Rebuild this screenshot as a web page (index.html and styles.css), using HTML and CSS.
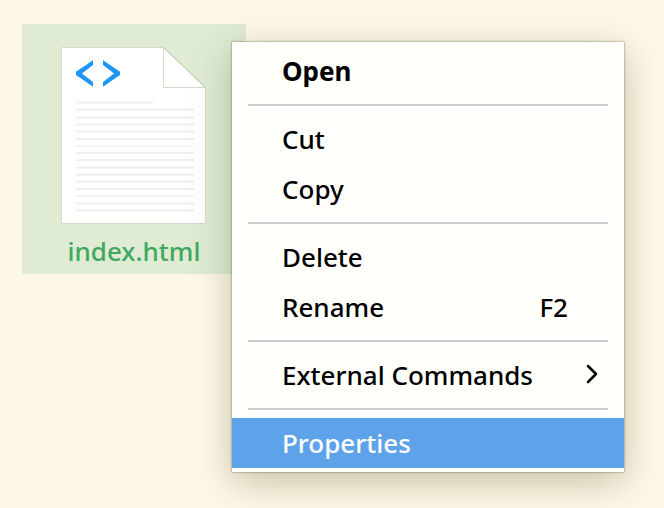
FILE: index.html
```html
<!DOCTYPE html>
<html lang="en">
<head>
<meta charset="utf-8">
<title>File manager</title>
<link rel="stylesheet" href="styles.css">
</head>
<body>
<main class="desktop">
  <figure class="file">
    <svg class="file-icon" viewBox="61 46 146 179" aria-hidden="true">
      <path class="paper" d="M61.5 47.5H163.5L205.5 87.5V223.5H61.5Z"/>
      <path class="fold" d="M163.5 47.5V87.5H205.5Z"/>
      <path class="crease" d="M163.5 47.5L205.5 87.5"/>
      <path class="code" d="M93 60.3L76 71.7V75L93 86.7V82L82 73.4L93 65ZM103 60.3L120 71.7V75L103 86.7V82L114 73.4L103 65Z"/>
      <path class="line" d="M76 102.5H153M76 109.5H194M76 117.5H194M76 124.5H194M76 131.5H194M76 139H194M76 153H194M76 160H194M76 167.5H194M76 174.5H194M76 181.5H194M76 189H194M76 203.5H194M76 210.5H194"/>
      <path class="line faint" d="M76 146H194M76 196H194"/>
    </svg>
    <figcaption class="file-name">index.html</figcaption>
  </figure>
  <div class="menu" role="menu">
    <button class="item default" role="menuitem">Open</button>
    <hr class="separator">
    <button class="item" role="menuitem">Cut</button>
    <button class="item" role="menuitem">Copy</button>
    <hr class="separator">
    <button class="item" role="menuitem">Delete</button>
    <button class="item" role="menuitem">Rename<span class="shortcut">F2</span></button>
    <hr class="separator">
    <button class="item submenu" role="menuitem" aria-haspopup="true">External Commands
      <svg class="chevron" viewBox="0 0 12 20" aria-hidden="true"><path d="M2 2L10 10L2 18"/></svg>
    </button>
    <hr class="separator">
    <button class="item selected" role="menuitem">Properties</button>
  </div>
</main>
</body>
</html>
```
FILE: styles.css
```css
* {
  box-sizing: border-box;
}

body {
  margin: 0;
  background: #fff8e7;
  color: #000;
  font: 500 26px/32px "Noto Sans", "Open Sans", sans-serif;
}

.desktop {
  position: relative;
  min-height: 100vh;
  padding: 24px 22px;
}

.file {
  display: flex;
  flex-direction: column;
  align-items: center;
  width: 224px;
  height: 250px;
  margin: 0;
  padding-top: 22px;
  background: #dfecd3;
}

.file-icon {
  width: 146px;
  height: 179px;
}

.paper,
.fold {
  fill: #fff;
  stroke: #d9d8cb;
}

.crease {
  stroke: #c6c3ac;
}

.code {
  fill: #1e96f5;
}

.line {
  fill: none;
  stroke: #eee;
  stroke-width: 2;
}

.faint {
  stroke: #f4f4f4;
}

.file-name {
  margin-top: 10px;
  color: #41a863;
}

/* Context menu floating over the desktop */
.menu {
  position: absolute;
  top: 42px;
  left: 232px;
  right: 40px;
  padding: 4px 0;
  background: #fffffb;
  box-shadow: 0 0 2px rgba(60, 65, 40, 0.7), 0 10px 36px rgba(75, 85, 45, 0.34);
}

.item {
  display: flex;
  align-items: center;
  justify-content: space-between;
  width: 100%;
  height: 50px;
  padding: 0 56px 0 50px;
  border: 0;
  background: none;
  color: inherit;
  font: inherit;
  text-align: left;
}

.default {
  font-weight: 700;
}

.submenu {
  padding-right: 26px;
}

.selected {
  background: #5ea2ea;
  color: #fff;
}

.separator {
  height: 2px;
  margin: 8px 16px;
  border: 0;
  background: #cdcdd0;
}

.chevron {
  width: 12px;
  height: 20px;
  margin-bottom: 2px;
}

.chevron path {
  fill: none;
  stroke: #000;
  stroke-width: 2.5;
  stroke-linecap: round;
  stroke-linejoin: round;
}
```
